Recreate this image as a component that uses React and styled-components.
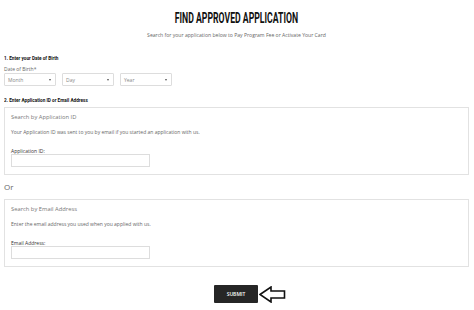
import React from 'react';
import styled, { createGlobalStyle } from 'styled-components';

const GlobalStyle = createGlobalStyle`
  html, body {
    margin: 0;
    padding: 0;
    background: #fff;
  }
  body {
    font-family: 'Open Sans', 'Liberation Sans', sans-serif;
    color: #555;
  }
`;

const selects = ['Month', 'Day', 'Year'];

const boxes = [
  {
    title: 'Search by Application ID',
    help: 'Your Application ID was sent to you by email if you started an application with us.',
    label: 'Application ID:',
  },
  {
    title: 'Search by Email Address',
    help: 'Enter the email address you used when you applied with us.',
    label: 'Email Address:',
  },
];

function ArrowIcon() {
  return (
    <svg width="27" height="17" viewBox="0 0 27 17">
      <path
        d="M1 8.5 L12 1 L12 5 L25.5 5 L25.5 12 L12 12 L12 16 Z"
        fill="#fff"
        stroke="#111"
        strokeWidth="1.6"
        strokeLinejoin="miter"
      />
    </svg>
  );
}

function SearchBox({ title, help, label }) {
  return (
    <Box>
      <BoxTitle>{title}</BoxTitle>
      <Help>{help}</Help>
      <FieldLabel>{label}</FieldLabel>
      <TextInput />
    </Box>
  );
}

export default function App() {
  return (
    <Page>
      <GlobalStyle />
      <Header>
        <Title>FIND APPROVED APPLICATION</Title>
        <Subtitle>Search for your application below to Pay Program Fee or Activate Your Card</Subtitle>
      </Header>

      <Step>1. Enter your Date of Birth</Step>
      <SmallLabel>Date of Birth*</SmallLabel>
      <SelectRow>
        {selects.map(s => (
          <Select key={s}>
            <span>{s}</span>
            <Caret />
          </Select>
        ))}
      </SelectRow>

      <Step>2. Enter Application ID or Email Address</Step>
      <SearchBox {...boxes[0]} />
      <Or>Or</Or>
      <SearchBox {...boxes[1]} />

      <Footer>
        <SubmitButton>SUBMIT</SubmitButton>
        <ArrowIcon />
      </Footer>
    </Page>
  );
}

const Page = styled.div`
  width: 474px;
  height: 310px;
  box-sizing: border-box;
  padding: 9px 5px 0 4px;
  overflow: hidden;
`;

const Header = styled.div`
  display: flex;
  flex-direction: column;
  align-items: center;
`;

// the original uses a bold condensed face; squeeze Roboto to match its width
const Title = styled.h1`
  margin: 0;
  font-family: 'Roboto', 'Liberation Sans', sans-serif;
  font-weight: 700;
  font-size: 14px;
  line-height: 18px;
  color: #111;
  white-space: nowrap;
  transform: scaleX(0.62);
`;

const Subtitle = styled.p`
  margin: 4px 0 0;
  font-size: 5.1px;
  line-height: 8px;
  color: #666;
`;

const Step = styled.h3`
  margin: 15px 0 0;
  font-family: 'Roboto', 'Liberation Sans', sans-serif;
  font-weight: 700;
  font-size: 6px;
  line-height: 8px;
  color: #111;
  white-space: nowrap;
  transform: scaleX(0.78);
  transform-origin: left center;
`;

const SmallLabel = styled.div`
  margin-top: 4px;
  font-size: 5px;
  line-height: 6px;
  color: #666;
`;

const SelectRow = styled.div`
  display: flex;
  gap: 6px;
  margin-top: 1px;
  margin-bottom: -5px;
`;

const Select = styled.div`
  width: 52px;
  height: 13px;
  box-sizing: border-box;
  border: 1px solid #ddd;
  border-radius: 1px;
  display: flex;
  align-items: center;
  justify-content: space-between;
  padding: 0 4px 0 3px;
  font-size: 5px;
  color: #888;
`;

const Caret = styled.span`
  width: 0;
  height: 0;
  border-left: 1.5px solid transparent;
  border-right: 1.5px solid transparent;
  border-top: 2px solid #555;
`;

const Box = styled.div`
  margin-top: 3px;
  border: 1px solid #e2e2e2;
  height: 68px;
  box-sizing: border-box;
  padding: 5px 6px 0;
`;

const BoxTitle = styled.div`
  font-size: 5.8px;
  line-height: 8px;
  color: #777;
`;

const Help = styled.div`
  margin-top: 8px;
  font-size: 5px;
  line-height: 7px;
  color: #666;
`;

const FieldLabel = styled.div`
  margin-top: 12px;
  font-size: 5px;
  line-height: 6px;
  color: #333;
`;

const TextInput = styled.div`
  width: 139px;
  height: 13px;
  box-sizing: border-box;
  border: 1px solid #ddd;
`;

const Or = styled.div`
  margin-top: 7px;
  margin-bottom: 7px;
  font-size: 8px;
  line-height: 10px;
  color: #666;
`;

const Footer = styled.div`
  display: flex;
  align-items: center;
  justify-content: center;
  gap: 1px;
  margin-top: 18px;
  padding-left: 27px;
`;

const SubmitButton = styled.button`
  width: 44px;
  height: 18px;
  border: none;
  border-radius: 1px;
  background: #262626;
  color: #fff;
  font-family: 'Open Sans', 'Liberation Sans', sans-serif;
  font-size: 5px;
  font-weight: 600;
  padding: 0;
`;
